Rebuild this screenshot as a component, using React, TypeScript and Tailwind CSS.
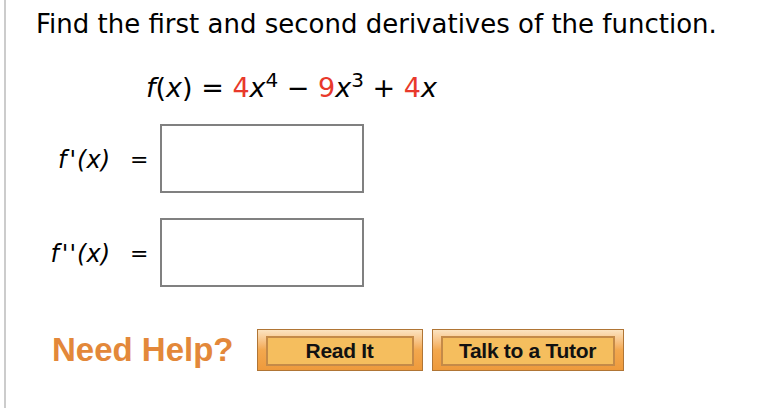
import React from 'react';

const verdana = { fontFamily: '"DejaVu Sans", Verdana, sans-serif' };
const arial = { fontFamily: '"Liberation Sans", Arial, sans-serif' };

const Red: React.FC<{ children: React.ReactNode }> = ({ children }) => (
  <span className="text-[#e8392b] not-italic">{children}</span>
);

const AnswerRow: React.FC<{ primes: string }> = ({ primes }) => (
  <div className="flex items-center">
    <div className="w-[104px] pt-[2px] text-right text-[24px] italic text-black" style={verdana}>
      f<span className="ml-[3px] tracking-[1px]">{primes}</span>(x)
    </div>
    <div className="ml-[20px] w-[14px] pt-[2px] text-[22px] text-black" style={verdana}>=</div>
    <input
      type="text"
      className="ml-[16px] h-[69px] w-[204px] border-2 border-[#808080] bg-white outline-none"
    />
  </div>
);

const HelpButton: React.FC<{ label: string; width: string }> = ({ label, width }) => (
  <button
    className={`${width} h-[42px] border border-[#b07535] bg-gradient-to-b from-[#fbe3c0] via-[#f3a84e] to-[#ee9a3c] pt-[6px] px-[8px] pb-[4px]`}
  >
    <div
      className="flex h-full items-center justify-center border-2 border-[#c48a48] bg-[#f5be5e] text-[21px] font-bold tracking-[-0.3px] text-[#111]"
      style={arial}
    >
      {label}
    </div>
  </button>
);

const App: React.FC = () => {
  return (
    <div className="h-[408px] w-[772px] bg-white">
      <div className="ml-[4px] h-full border-l-2 border-[#cccccc]">
        <h1 className="pl-[30px] pt-[9px] text-[26px] leading-[30px] text-black" style={verdana}>
          Find the first and second derivatives of the function.
        </h1>

        <p className="ml-[140px] mt-[34px] text-[27px] leading-[30px] text-black" style={verdana}>
          <i>f</i>(<i>x</i>) = <Red>4</Red><i>x</i>
          <sup className="text-[20px]">4</sup> − <Red>9</Red><i>x</i>
          <sup className="text-[20px]">3</sup> + <Red>4</Red><i>x</i>
        </p>

        <div className="mt-[21px] flex flex-col gap-[25px]">
          <AnswerRow primes="'" />
          <AnswerRow primes="''" />
        </div>

        <div className="mt-[38px] flex items-center">
          <span className="ml-[46px] text-[33px] font-bold text-[#e3883a]" style={arial}>
            Need Help?
          </span>
          <div className="ml-[23px] flex gap-[9px]">
            <HelpButton label="Read It" width="w-[166px]" />
            <HelpButton label="Talk to a Tutor" width="w-[192px]" />
          </div>
        </div>
      </div>
    </div>
  );
};

export default App;
